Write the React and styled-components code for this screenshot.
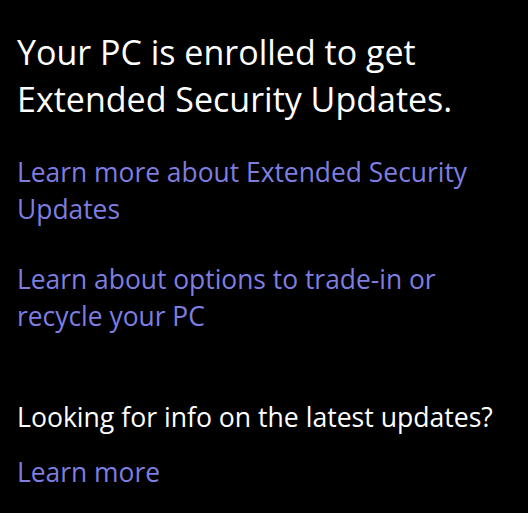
import React from "react";
import styled, { createGlobalStyle } from "styled-components";

const Global = createGlobalStyle`
  html, body {
    margin: 0;
    padding: 0;
    background: #000;
  }
  body {
    font-family: "Open Sans", "Noto Sans", sans-serif;
  }
`;

const Page = styled.main`
  width: 528px;
  height: 513px;
  box-sizing: border-box;
  background: #000;
  padding: 29px 0 0 17px;
  display: flex;
  flex-direction: column;
  overflow: hidden;
`;

const Heading = styled.h1`
  margin: 0;
  font-size: 34px;
  line-height: 47px;
  font-weight: 400;
  color: #fff;
  width: 505px;
`;

const Link = styled.a`
  display: block;
  margin-top: ${(p) => p.$gap}px;
  font-size: 26.4px;
  line-height: 37px;
  color: #7d7ee0;
  text-decoration: none;
  width: 505px;
`;

const Text = styled.p`
  margin: ${(p) => p.$gap}px 0 0;
  font-size: 26.6px;
  line-height: 34px;
  color: #fff;
  white-space: nowrap;
`;

export default function App() {
  return (
    <>
      <Global />
      <Page>
        <Heading>
          Your PC is enrolled to get
          <br />
          Extended Security Updates.
        </Heading>
        <Link href="#" $gap={31}>
          Learn more about Extended Security
          <br />
          Updates
        </Link>
        <Link href="#" $gap={33}>
          Learn about options to trade-in or
          <br />
          recycle your PC
        </Link>
        <Text $gap={65}>Looking for info on the latest updates?</Text>
        <Link href="#" $gap={20}>
          Learn more
        </Link>
      </Page>
    </>
  );
}
